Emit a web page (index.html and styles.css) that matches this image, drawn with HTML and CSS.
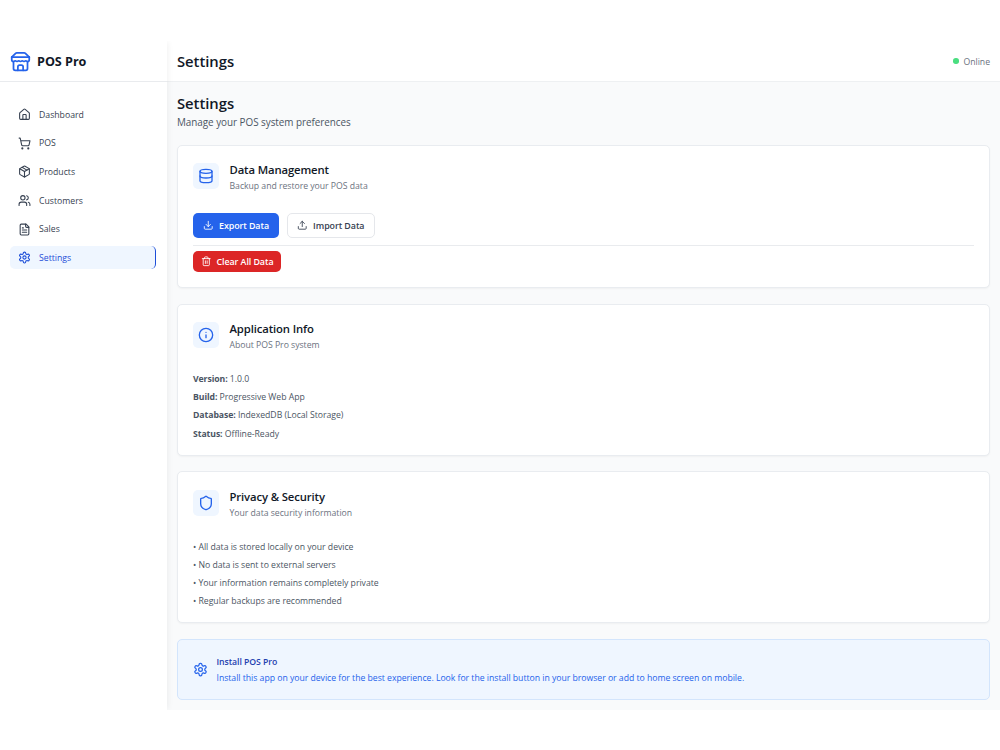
FILE: index.html
```html
<!DOCTYPE html>
<html lang="en">
  <head>
    <meta charset="UTF-8" />
    <meta name="viewport" content="width=device-width, initial-scale=1.0" />
    <title>POS Pro - Settings</title>
    <link rel="stylesheet" href="styles.css">
  </head>
  <body>
    <div class="app">
      <aside class="sidebar">
        <div class="brand">
          <svg class="icon brand-icon" viewBox="0 0 24 24">
            <path d="m2 7 4.41-4.41A2 2 0 0 1 7.83 2h8.34a2 2 0 0 1 1.42.59L22 7" />
            <path d="M4 12v8a2 2 0 0 0 2 2h12a2 2 0 0 0 2-2v-8" />
            <path d="M15 22v-4a2 2 0 0 0-2-2h-2a2 2 0 0 0-2 2v4" />
            <path d="M2 7h20" />
            <path d="M22 7v3a2 2 0 0 1-2 2 2.7 2.7 0 0 1-1.59-.63.7.7 0 0 0-.82 0A2.7 2.7 0 0 1 16 12a2.7 2.7 0 0 1-1.59-.63.7.7 0 0 0-.82 0A2.7 2.7 0 0 1 12 12a2.7 2.7 0 0 1-1.59-.63.7.7 0 0 0-.82 0A2.7 2.7 0 0 1 8 12a2.7 2.7 0 0 1-1.59-.63.7.7 0 0 0-.82 0A2.7 2.7 0 0 1 4 12a2 2 0 0 1-2-2V7" />
          </svg>
          <span class="brand-name">POS Pro</span>
        </div>
        <nav class="nav">
          <a class="nav-link" href="#">
            <svg class="icon" viewBox="0 0 24 24">
              <path d="M15 21v-8a1 1 0 0 0-1-1h-4a1 1 0 0 0-1 1v8" />
              <path d="M3 10a2 2 0 0 1 .709-1.528l7-5.999a2 2 0 0 1 2.582 0l7 5.999A2 2 0 0 1 21 10v9a2 2 0 0 1-2 2H5a2 2 0 0 1-2-2z" />
            </svg>
            <span>Dashboard</span>
          </a>
          <a class="nav-link" href="#">
            <svg class="icon" viewBox="0 0 24 24">
              <circle cx="8" cy="21" r="1" />
              <circle cx="19" cy="21" r="1" />
              <path d="M2.05 2.05h2l2.66 12.42a2 2 0 0 0 2 1.58h9.78a2 2 0 0 0 1.95-1.57l1.65-7.43H5.12" />
            </svg>
            <span>POS</span>
          </a>
          <a class="nav-link" href="#">
            <svg class="icon" viewBox="0 0 24 24">
              <path d="M11 21.73a2 2 0 0 0 2 0l7-4A2 2 0 0 0 21 16V8a2 2 0 0 0-1-1.73l-7-4a2 2 0 0 0-2 0l-7 4A2 2 0 0 0 3 8v8a2 2 0 0 0 1 1.73z" />
              <path d="M12 22V12" />
              <path d="m3.3 7 8.7 5 8.7-5" />
              <path d="m7.5 4.27 9 5.15" />
            </svg>
            <span>Products</span>
          </a>
          <a class="nav-link" href="#">
            <svg class="icon" viewBox="0 0 24 24">
              <path d="M16 21v-2a4 4 0 0 0-4-4H6a4 4 0 0 0-4 4v2" />
              <circle cx="9" cy="7" r="4" />
              <path d="M22 21v-2a4 4 0 0 0-3-3.87" />
              <path d="M16 3.13a4 4 0 0 1 0 7.75" />
            </svg>
            <span>Customers</span>
          </a>
          <a class="nav-link" href="#">
            <svg class="icon" viewBox="0 0 24 24">
              <path d="M15 2H6a2 2 0 0 0-2 2v16a2 2 0 0 0 2 2h12a2 2 0 0 0 2-2V7z" />
              <path d="M14 2v4a2 2 0 0 0 2 2h4" />
              <path d="M10 9H8" />
              <path d="M16 13H8" />
              <path d="M16 17H8" />
            </svg>
            <span>Sales</span>
          </a>
          <a class="nav-link active" href="#">
            <svg class="icon" viewBox="0 0 24 24">
              <path d="M12.22 2h-.44a2 2 0 0 0-2 2v.18a2 2 0 0 1-1 1.73l-.43.25a2 2 0 0 1-2 0l-.15-.08a2 2 0 0 0-2.73.73l-.22.38a2 2 0 0 0 .73 2.73l.15.1a2 2 0 0 1 1 1.72v.51a2 2 0 0 1-1 1.74l-.15.09a2 2 0 0 0-.73 2.73l.22.38a2 2 0 0 0 2.73.73l.15-.08a2 2 0 0 1 2 0l.43.25a2 2 0 0 1 1 1.73V20a2 2 0 0 0 2 2h.44a2 2 0 0 0 2-2v-.18a2 2 0 0 1 1-1.73l.43-.25a2 2 0 0 1 2 0l.15.08a2 2 0 0 0 2.73-.73l.22-.39a2 2 0 0 0-.73-2.73l-.15-.08a2 2 0 0 1-1-1.74v-.5a2 2 0 0 1 1-1.74l.15-.09a2 2 0 0 0 .73-2.73l-.22-.38a2 2 0 0 0-2.73-.73l-.15.08a2 2 0 0 1-2 0l-.43-.25a2 2 0 0 1-1-1.73V4a2 2 0 0 0-2-2z" />
              <circle cx="12" cy="12" r="3" />
            </svg>
            <span>Settings</span>
          </a>
        </nav>
      </aside>

      <div class="main">
        <header class="topbar">
          <h1 class="title">Settings</h1>
          <div class="status"><span class="status-dot"></span><span class="status-text">Online</span></div>
        </header>

        <main class="content">
          <div class="page-head">
            <h2 class="title">Settings</h2>
            <p class="page-sub">Manage your POS system preferences</p>
          </div>

          <section class="card card-data">
            <div class="card-head">
              <div class="card-icon">
                <svg class="icon" viewBox="0 0 24 24">
                  <ellipse cx="12" cy="5" rx="9" ry="3" />
                  <path d="M3 5v14a9 3 0 0 0 18 0V5" />
                  <path d="M3 12a9 3 0 0 0 18 0" />
                </svg>
              </div>
              <div class="card-title">
                <h3>Data Management</h3>
                <p>Backup and restore your POS data</p>
              </div>
            </div>
            <div class="actions">
              <button class="btn btn-primary">
                <svg class="icon" viewBox="0 0 24 24">
                  <path d="M21 15v4a2 2 0 0 1-2 2H5a2 2 0 0 1-2-2v-4" />
                  <path d="m7 10 5 5 5-5" />
                  <path d="M12 15V3" />
                </svg>
                <span>Export Data</span>
              </button>
              <button class="btn btn-outline">
                <svg class="icon" viewBox="0 0 24 24">
                  <path d="M21 15v4a2 2 0 0 1-2 2H5a2 2 0 0 1-2-2v-4" />
                  <path d="m17 8-5-5-5 5" />
                  <path d="M12 3v12" />
                </svg>
                <span>Import Data</span>
              </button>
            </div>
            <div class="danger">
              <button class="btn btn-danger">
                <svg class="icon" viewBox="0 0 24 24">
                  <path d="M3 6h18" />
                  <path d="M19 6v14a2 2 0 0 1-2 2H7a2 2 0 0 1-2-2V6" />
                  <path d="M8 6V4a2 2 0 0 1 2-2h4a2 2 0 0 1 2 2v2" />
                  <path d="M10 11v6" />
                  <path d="M14 11v6" />
                </svg>
                <span>Clear All Data</span>
              </button>
            </div>
          </section>

          <section class="card card-info">
            <div class="card-head">
              <div class="card-icon">
                <svg class="icon" viewBox="0 0 24 24">
                  <circle cx="12" cy="12" r="10" />
                  <path d="M12 16v-4" />
                  <path d="M12 8h.01" />
                </svg>
              </div>
              <div class="card-title">
                <h3>Application Info</h3>
                <p>About POS Pro system</p>
              </div>
            </div>
            <div class="lines">
              <p><strong>Version:</strong> 1.0.0</p>
              <p><strong>Build:</strong> Progressive Web App</p>
              <p><strong>Database:</strong> IndexedDB (Local Storage)</p>
              <p><strong>Status:</strong> Offline-Ready</p>
            </div>
          </section>

          <section class="card card-info">
            <div class="card-head">
              <div class="card-icon">
                <svg class="icon" viewBox="0 0 24 24">
                  <path d="M20 13c0 5-3.5 7.5-7.66 8.95a1 1 0 0 1-.67-.01C7.5 20.5 4 18 4 13V6a1 1 0 0 1 1-1c2 0 4.5-1.2 6.24-2.72a1.17 1.17 0 0 1 1.52 0C14.51 3.81 17 5 19 5a1 1 0 0 1 1 1z" />
                </svg>
              </div>
              <div class="card-title">
                <h3>Privacy &amp; Security</h3>
                <p>Your data security information</p>
              </div>
            </div>
            <div class="lines">
              <p>• All data is stored locally on your device</p>
              <p>• No data is sent to external servers</p>
              <p>• Your information remains completely private</p>
              <p>• Regular backups are recommended</p>
            </div>
          </section>

          <section class="install">
            <svg class="icon" viewBox="0 0 24 24">
              <path d="M12.22 2h-.44a2 2 0 0 0-2 2v.18a2 2 0 0 1-1 1.73l-.43.25a2 2 0 0 1-2 0l-.15-.08a2 2 0 0 0-2.73.73l-.22.38a2 2 0 0 0 .73 2.73l.15.1a2 2 0 0 1 1 1.72v.51a2 2 0 0 1-1 1.74l-.15.09a2 2 0 0 0-.73 2.73l.22.38a2 2 0 0 0 2.73.73l.15-.08a2 2 0 0 1 2 0l.43.25a2 2 0 0 1 1 1.73V20a2 2 0 0 0 2 2h.44a2 2 0 0 0 2-2v-.18a2 2 0 0 1 1-1.73l.43-.25a2 2 0 0 1 2 0l.15.08a2 2 0 0 0 2.73-.73l.22-.39a2 2 0 0 0-.73-2.73l-.15-.08a2 2 0 0 1-1-1.74v-.5a2 2 0 0 1 1-1.74l.15-.09a2 2 0 0 0 .73-2.73l-.22-.38a2 2 0 0 0-2.73-.73l-.15.08a2 2 0 0 1-2 0l-.43-.25a2 2 0 0 1-1-1.73V4a2 2 0 0 0-2-2z" />
              <circle cx="12" cy="12" r="3" />
            </svg>
            <div class="install-text">
              <h4>Install POS Pro</h4>
              <p>Install this app on your device for the best experience. Look for the install button in your browser or add to home screen on mobile.</p>
            </div>
          </section>
        </main>
      </div>
    </div>
  </body>
</html>
```
FILE: styles.css
```css
* {
  box-sizing: border-box;
  margin: 0;
  padding: 0;
}
body {
  background-color: #fff;
  color: #111827;
  font-family: "Open Sans", "Noto Sans", sans-serif;
  font-size: 8.7px;
  letter-spacing: -0.03px;
}
.app {
  display: flex;
  height: 669px;
  margin-top: 41px;
}
.icon {
  width: 13px;
  height: 13px;
  flex-shrink: 0;
  fill: none;
  stroke: currentColor;
  stroke-width: 2;
  stroke-linecap: round;
  stroke-linejoin: round;
}

/* Sidebar */
.sidebar {
  position: relative;
  width: 167px;
  flex-shrink: 0;
  background-color: #fff;
  box-shadow: 2px 0 6px -1px rgba(0, 0, 0, 0.06);
  clip-path: inset(0 -12px 0 0);
}
.brand {
  display: flex;
  align-items: center;
  gap: 6px;
  height: 41px;
  padding-left: 10px;
  border-bottom: 1px solid #e9ebee;
}
.brand-icon {
  width: 21px;
  height: 21px;
  color: #2563eb;
}
.brand-name {
  font-size: 12.6px;
  font-weight: 700;
}
.nav {
  display: flex;
  flex-direction: column;
  gap: 5.1px;
  padding: 21px 11px 20px 10px;
}
.nav-link {
  display: flex;
  align-items: center;
  gap: 8px;
  height: 23.5px;
  padding-left: 8px;
  border-radius: 5px;
  color: #374151;
  font-weight: 500;
  letter-spacing: 0;
  text-decoration: none;
}
.nav-link.active {
  background-color: #eff6ff;
  border-right: 1.3px solid #1d4ed8;
  color: #1d4ed8;
}

/* Main column */
.main {
  flex: 1;
  background-color: #f9fafb;
}
.topbar {
  display: flex;
  align-items: center;
  justify-content: space-between;
  height: 41px;
  padding: 0 10px;
  background-color: #fff;
  border-bottom: 1px solid #eef0f2;
}
.title {
  font-size: 14.8px;
  font-weight: 600;
  line-height: 21px;
}
.status {
  display: flex;
  align-items: center;
  gap: 5px;
  color: #6b7280;
}
.status-dot {
  width: 5.5px;
  height: 5.5px;
  border-radius: 50%;
  background-color: #4ade80;
}
.status-text {
  padding-top: 2px;
}
.content {
  display: flex;
  flex-direction: column;
  gap: 15.5px;
  padding: 11px 10px 10px;
}
.page-head {
  height: 36px;
}
.page-sub {
  font-size: 9.9px;
  line-height: 16px;
  color: #4b5563;
}

/* Cards */
.card {
  padding: 15.5px 15.5px 16px 15px;
  background-color: #fff;
  border: 1px solid #e9ecf0;
  border-radius: 5px;
  box-shadow: 0 1px 2px rgba(0, 0, 0, 0.04);
}
.card-data {
  height: 143.5px;
}
.card-info {
  height: 152px;
}
.card-head {
  display: flex;
  align-items: center;
  gap: 10.5px;
  height: 30px;
}
.card-icon {
  display: flex;
  align-items: center;
  justify-content: center;
  width: 26px;
  height: 26px;
  border-radius: 5px;
  background-color: #eff6ff;
  color: #2563eb;
}
.card-icon .icon {
  width: 16px;
  height: 16px;
}
.card-title {
  padding-top: 3px;
}
.card h3 {
  font-size: 11.3px;
  font-weight: 600;
  line-height: 17px;
  letter-spacing: -0.12px;
}
.card-head p {
  line-height: 16px;
  color: #6b7280;
}
.actions {
  display: flex;
  gap: 7.5px;
  margin-top: 22px;
}
.btn {
  display: flex;
  align-items: center;
  justify-content: center;
  height: 25px;
  border: 1px solid transparent;
  border-radius: 5px;
  font-family: inherit;
  font-size: 8.9px;
  font-weight: 600;
  letter-spacing: -0.07px;
  cursor: pointer;
}
.btn .icon {
  width: 10.5px;
  height: 10.5px;
  margin-right: 5.5px;
}
.btn-primary {
  width: 86px;
  background-color: #2563eb;
  color: #fff;
}
.btn-outline {
  width: 88.5px;
  background-color: #fff;
  border-color: #e5e7eb;
  color: #374151;
}
.danger {
  margin-top: 7px;
  padding-top: 5px;
  border-top: 1px solid #e9ebee;
}
.btn-danger {
  width: 88px;
  height: 21px;
  background-color: #dc2626;
  color: #fff;
}
.lines {
  margin-top: 20px;
  color: #4b5563;
}
.lines p {
  line-height: 18.2px;
}
.lines strong {
  font-weight: 700;
  letter-spacing: -0.08px;
}

/* Install banner */
.install {
  display: flex;
  align-items: center;
  gap: 8.5px;
  height: 61px;
  padding: 0 15px;
  background-color: #eff6ff;
  border: 1px solid #d3e5fc;
  border-radius: 5px;
  color: #2563eb;
}
.install .icon {
  width: 15px;
  height: 15px;
}
.install-text {
  padding-top: 1px;
}
.install h4 {
  font-size: 8.7px;
  font-weight: 600;
  line-height: 16px;
  letter-spacing: -0.06px;
  color: #1e40af;
}
.install p {
  line-height: 16px;
}
```
